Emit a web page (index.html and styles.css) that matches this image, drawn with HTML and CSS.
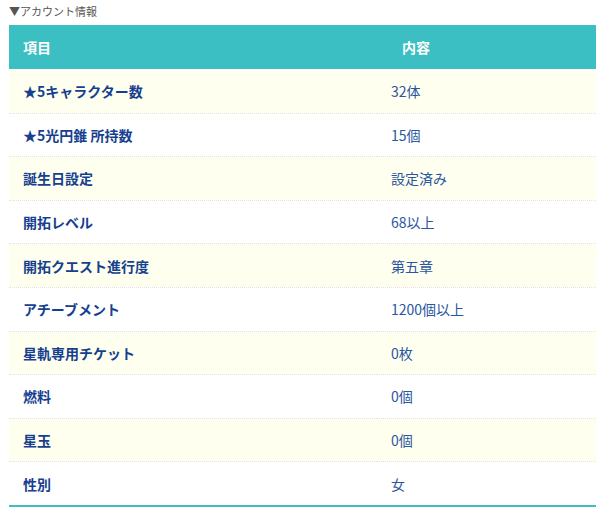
FILE: index.html
```html
<!DOCTYPE html>
<html lang="ja">
<head>
<meta charset="utf-8">
<link rel="stylesheet" href="styles.css">
</head>
<body>
<div class="caption">▼アカウント情報</div>
<table class="info">
  <thead>
    <tr><th class="c1">項目</th><th class="c2">内容</th></tr>
  </thead>
  <tbody>
    <tr><td class="k">★5キャラクター数</td><td class="v">32体</td></tr>
    <tr><td class="k">★5光円錐 所持数</td><td class="v">15個</td></tr>
    <tr><td class="k">誕生日設定</td><td class="v">設定済み</td></tr>
    <tr><td class="k">開拓レベル</td><td class="v">68以上</td></tr>
    <tr><td class="k">開拓クエスト進行度</td><td class="v">第五章</td></tr>
    <tr><td class="k">アチーブメント</td><td class="v">1200個以上</td></tr>
    <tr><td class="k">星軌専用チケット</td><td class="v">0枚</td></tr>
    <tr><td class="k">燃料</td><td class="v">0個</td></tr>
    <tr><td class="k">星玉</td><td class="v">0個</td></tr>
    <tr><td class="k">性別</td><td class="v">女</td></tr>
  </tbody>
</table>
</body>
</html>
```
FILE: styles.css
```css
html, body {
  margin: 0;
  padding: 0;
  background: #ffffff;
}
body {
  padding: 3px 4px 0 9px;
  font-family: "Noto Sans CJK JP", "Noto Sans", sans-serif;
}
.caption {
  font-size: 11px;
  line-height: 16px;
  color: #555555;
  height: 22px;
}
.info {
  width: 587px;
  border-collapse: collapse;
  border-bottom: 2px solid #3bbfc2;
}
.info th {
  background: #3bbfc2;
  color: #ffffff;
  font-size: 14px;
  font-weight: bold;
  text-align: left;
  height: 44px;
  padding: 0 14px;
  border-bottom: 1px solid #ffffff;
}
.info th.c2 {
  padding-left: 25px;
}
.info .c1 {
  width: 340px;
}
.info td {
  height: 42.6px;
  padding: 0 14px;
  font-size: 14px;
  border-bottom: 1px dotted #e2e2e2;
}
.info tbody tr:nth-child(odd) td {
  background: #fffff0;
}
.info tbody tr:last-child td {
  border-bottom: none;
}
.info td.k {
  color: #163f8f;
  font-weight: bold;
}
.info td.v {
  color: #2a56a0;
}
```
